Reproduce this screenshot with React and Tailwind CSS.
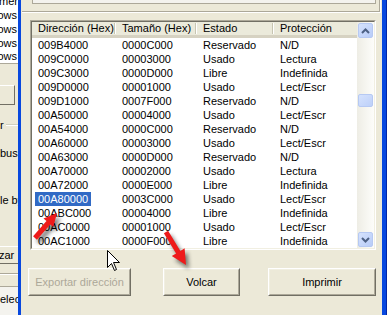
import React from "react";

const rows = [
  ["009B4000", "0000C000", "Reservado", "N/D"],
  ["009C0000", "00003000", "Usado", "Lectura"],
  ["009C3000", "0000D000", "Libre", "Indefinida"],
  ["009D0000", "00001000", "Usado", "Lect/Escr"],
  ["009D1000", "0007F000", "Reservado", "N/D"],
  ["00A50000", "00004000", "Usado", "Lect/Escr"],
  ["00A54000", "0000C000", "Reservado", "N/D"],
  ["00A60000", "00003000", "Usado", "Lect/Escr"],
  ["00A63000", "0000D000", "Reservado", "N/D"],
  ["00A70000", "00002000", "Usado", "Lectura"],
  ["00A72000", "0000E000", "Libre", "Indefinida"],
  ["00A80000", "0003C000", "Usado", "Lect/Escr"],
  ["00ABC000", "00004000", "Libre", "Indefinida"],
  ["00AC0000", "00001000", "Usado", "Lect/Escr"],
  ["00AC1000", "0000F000", "Libre", "Indefinida"],
];

function arrowPoints(x1, y1, x2, y2, sw, hl, hw) {
  const dx = x2 - x1;
  const dy = y2 - y1;
  const L = Math.hypot(dx, dy);
  const ux = dx / L;
  const uy = dy / L;
  const px = -uy;
  const py = ux;
  const bx = x2 - ux * hl;
  const by = y2 - uy * hl;
  const pts = [
    [x1 + (px * sw) / 2, y1 + (py * sw) / 2],
    [bx + (px * sw) / 2, by + (py * sw) / 2],
    [bx + (px * hw) / 2, by + (py * hw) / 2],
    [x2, y2],
    [bx - (px * hw) / 2, by - (py * hw) / 2],
    [bx - (px * sw) / 2, by - (py * sw) / 2],
    [x1 - (px * sw) / 2, y1 - (py * sw) / 2],
  ];
  return pts.map((p) => p[0].toFixed(1) + "," + p[1].toFixed(1)).join(" ");
}

function Btn({ children, disabled, className }) {
  return (
    <div
      className={
        "h-[28px] border border-t-white border-l-white border-b-[#716F64] border-r-[#716F64] " +
        className
      }
    >
      <div className="h-full border border-t-[#F1EFE2] border-l-[#F1EFE2] border-b-[#ACA899] border-r-[#ACA899] flex items-center justify-center bg-[#ECE9D8]">
        <span className={disabled ? "text-[#ACA899]" : "text-black"}>{children}</span>
      </div>
    </div>
  );
}

function ScrollBtn({ up }) {
  return (
    <div className="w-[17px] h-[17px] p-[1px]">
      <div className="w-full h-full rounded-[2px] border border-[#B6C9F3] bg-gradient-to-br from-[#D5E2FD] to-[#B8CCF8] flex items-center justify-center">
        <svg width="9" height="6" viewBox="0 0 9 6">
          {up ? (
            <polyline points="1,5 4.5,1.5 8,5" fill="none" stroke="#4D6185" strokeWidth="2" />
          ) : (
            <polyline points="1,1 4.5,4.5 8,1" fill="none" stroke="#4D6185" strokeWidth="2" />
          )}
        </svg>
      </div>
    </div>
  );
}

export default function App() {
  const colW = ["w-[84px]", "w-[81px]", "w-[77px]", "w-[83px]"];
  const headers = ["Dirección (Hex)", "Tamaño (Hex)", "Estado", "Protección"];
  const a1 = arrowPoints(35, 238, 57, 213, 5, 13, 13);
  const a2 = arrowPoints(166, 232, 186, 265, 5, 15, 15);
  return (
    <div className="relative w-[387px] h-[315px] overflow-hidden flex bg-[#ECE9D8] text-[11px] text-black font-['Liberation_Sans',Arial,sans-serif]">
      {/* left background window strip */}
      <div className="w-[18px] h-full flex flex-col overflow-hidden shrink-0">
        <div className="h-[64px] bg-white border-b border-[#ACA899] overflow-hidden flex flex-col items-end">
          <div className="mt-[-6px] leading-[14px] whitespace-nowrap">Documer</div>
          <div className="leading-[14px] whitespace-nowrap pr-[1px]">Windows</div>
          <div className="leading-[14px] whitespace-nowrap pr-[1px]">Windows</div>
          <div className="leading-[14px] whitespace-nowrap pr-[1px]">Windows</div>
          <div className="leading-[13px] whitespace-nowrap pr-[1px]">Windows</div>
        </div>
        <div className="mt-[21px] h-[20px] w-[15px] border-t border-b border-r border-t-white border-b-[#716F64] border-r-[#716F64]" />
        <div className="mt-[13px] h-[14px] flex items-center">
          <span className="leading-[14px]">r</span>
          <div className="flex-1 ml-[2px] h-[2px] border-t border-b border-t-[#D0D0BF] border-b-white" />
        </div>
        <div className="mt-[14px] leading-[14px] whitespace-nowrap">bus</div>
        <div className="mt-[33px] leading-[14px] whitespace-nowrap">le by</div>
        <div className="mt-[39px] h-[18px] border-t border-b border-t-white border-b-[#716F64] flex items-center whitespace-nowrap">
          <span className="ml-[-1px]">zar</span>
        </div>
        <div className="mt-[9px] h-[2px] border-t border-b border-t-[#ACA899] border-b-white" />
        <div className="mt-[11px] flex-1 border-t border-[#ACA899] bg-[#F4F3EE] whitespace-nowrap leading-[14px] pt-[5px]">elec</div>
      </div>

      {/* left frame */}
      <div className="w-[3px] h-full bg-[#0848DF] shrink-0" />

      {/* dialog content */}
      <div className="w-[361px] h-full flex flex-col shrink-0">
        {/* top group */}
        <div className="h-[20px] shrink-0">
          <div className="ml-[1px] w-[359px] h-[13px] border-r border-b border-white">
            <div className="h-full border-r border-b border-[#ACA899]">
              <div className="ml-[10px] w-[344px] h-[4px] border-l border-r border-b border-[#ACA899] bg-[#F4F3EE]" />
            </div>
          </div>
        </div>

        {/* list view */}
        <div className="ml-[9px] w-[346px] h-[230px] border border-t-[#ACA899] border-l-[#ACA899] border-b-white border-r-white shrink-0">
          <div className="w-full h-full border border-t-[#716F64] border-l-[#716F64] border-b-[#F1EFE2] border-r-[#F1EFE2] flex bg-white">
            <div className="w-[325px] flex flex-col">
              {/* header */}
              <div className="h-[16px] flex bg-[#EBEADB] border-b-[3px] border-[#D6D2C2]">
                {headers.map((h, i) => (
                  <div key={h} className={colW[i] + " relative flex items-center pl-[6px] whitespace-nowrap leading-[13px]"}>
                    {h}
                    {i < 3 && (
                      <div className="absolute right-0 top-[1px] bottom-[1px] w-[2px] border-l border-r border-l-[#C7C5B2] border-r-white" />
                    )}
                  </div>
                ))}
              </div>
              {/* rows */}
              {rows.map((r, ri) => (
                <div key={ri} className="h-[14px] flex leading-[14px] whitespace-nowrap">
                  {r.map((c, ci) =>
                    ci === 0 && ri === 11 ? (
                      <div key={ci} className={colW[ci] + " pl-[3px]"}>
                        <span className="inline-block px-[3px] bg-[#316AC5] text-white">{c}</span>
                      </div>
                    ) : (
                      <div key={ci} className={colW[ci] + " pl-[6px]"}>
                        {c}
                      </div>
                    )
                  )}
                </div>
              ))}
            </div>
            {/* scrollbar */}
            <div className="w-[17px] flex flex-col bg-gradient-to-r from-[#EEEDE5] to-[#FDFDFA]">
              <ScrollBtn up />
              <div className="flex-1">
                <div className="mt-[55px] mx-[1px] h-[13px] rounded-[2px] border border-[#B6C9F3] bg-gradient-to-br from-[#D5E2FD] to-[#BDD0F9]" />
              </div>
              <ScrollBtn />
            </div>
          </div>
        </div>

        {/* buttons */}
        <div className="mt-[18px] flex shrink-0">
          <Btn disabled className="ml-[7px] w-[103px]">Exportar dirección</Btn>
          <Btn className="ml-[32px] w-[77px]">Volcar</Btn>
          <Btn className="ml-[28px] w-[108px]">Imprimir</Btn>
        </div>
      </div>

      {/* right frame */}
      <div className="w-[5px] h-full bg-[#0848DF] border-r border-[#0026A8] shrink-0" />

      {/* overlays: arrows and cursor */}
      <svg className="absolute left-0 top-0 pointer-events-none" width="387" height="315" viewBox="0 0 387 315">
        <defs>
          <filter id="blur" x="-50%" y="-50%" width="200%" height="200%">
            <feGaussianBlur stdDeviation="2" />
          </filter>
        </defs>
        <g filter="url(#blur)" opacity="0.5" transform="translate(3,4)">
          <polygon points={a1} fill="#000" />
          <polygon points={a2} fill="#000" />
        </g>
        <polygon points={a1} fill="#EE1A1A" />
        <polygon points={a2} fill="#EE1A1A" />
        <polygon
          points="107.5,250.5 107.5,267.5 111.5,263.5 114.5,270.5 116.5,269.5 113.5,262.5 119.5,262.5"
          fill="#fff"
          stroke="#000"
          strokeWidth="1"
        />
      </svg>
    </div>
  );
}
